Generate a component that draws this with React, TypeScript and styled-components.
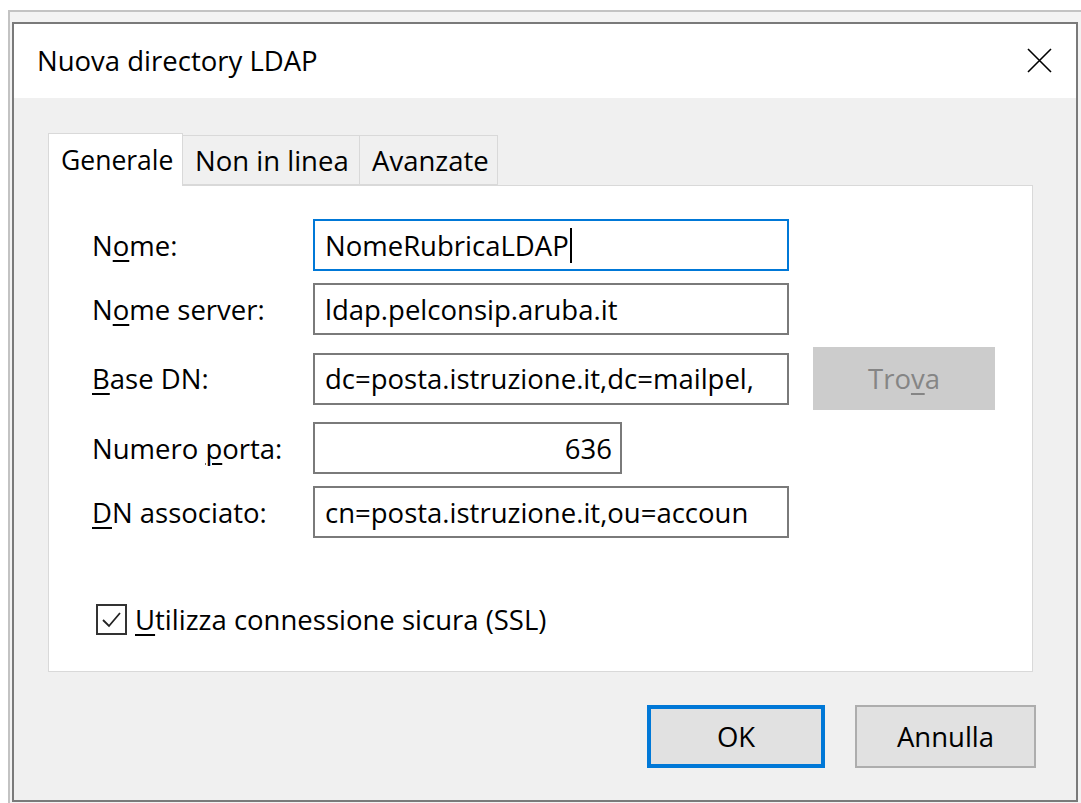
import React from 'react';
import styled, { createGlobalStyle } from 'styled-components';

const FONT = `"Open Sans", "Noto Sans", "Liberation Sans", sans-serif`;
const ACCENT = '#0078d7';
const TEXT_SIZE = '27.5px';

const GlobalStyle = createGlobalStyle`
  html, body {
    margin: 0;
    padding: 0;
    background: #ffffff;
  }
  body {
    font-family: ${FONT};
    color: #000000;
  }
`;

// ---------------------------------------------------------------------------
// window chrome
// ---------------------------------------------------------------------------

const Frame = styled.div`
  margin: 10px 0 0 8px;
  height: 793px;
  border-top: 2px solid #c3c3c3;
  border-left: 2px solid #c3c3c3;
  background: #f3f3f3;
  box-sizing: border-box;
  padding: 10px 0 0 2px;
`;

const Window = styled.div`
  width: 1066px;
  height: 780px;
  box-sizing: border-box;
  border: 2px solid #7a7a7a;
  background: #f0f0f0;
  display: flex;
  flex-direction: column;
`;

const TitleBar = styled.div`
  height: 74px;
  flex-shrink: 0;
  background: #ffffff;
  display: flex;
  align-items: center;
  justify-content: space-between;
  padding: 0 24px 0 23px;
`;

const Title = styled.span`
  font-size: ${TEXT_SIZE};
  margin-top: -2px;
`;

const CloseButton = styled.button`
  width: 25px;
  height: 25px;
  padding: 0;
  border: none;
  background: transparent;
  display: flex;
  margin-top: -2px;
`;

// ---------------------------------------------------------------------------
// tabs + panel
// ---------------------------------------------------------------------------

const Body = styled.div`
  flex: 1;
  display: flex;
  flex-direction: column;
`;

const TabArea = styled.div`
  padding: 34px 43px 0 34px;
`;

const TabStrip = styled.div`
  display: flex;
  align-items: flex-end;
  height: 53px;
`;

const Tab = styled.div<{ $active?: boolean; $w: number }>`
  width: ${({ $w }) => $w}px;
  height: ${({ $active }) => ($active ? '53px' : '50px')};
  box-sizing: border-box;
  padding-left: 12px;
  display: flex;
  align-items: center;
  font-size: ${({ $active }) => ($active ? '26.5px' : '27.5px')};
  white-space: nowrap;
  background: ${({ $active }) => ($active ? '#ffffff' : '#f0f0f0')};
  border: 1px solid #d9d9d9;
  border-bottom: ${({ $active }) => ($active ? 'none' : '1px solid #d9d9d9')};
  border-left: ${({ $active }) => ($active ? '1px solid #d9d9d9' : 'none')};
  margin-bottom: ${({ $active }) => ($active ? '-1px' : '0')};
  position: relative;
  z-index: ${({ $active }) => ($active ? 1 : 0)};
`;

const Panel = styled.div`
  height: 487px;
  box-sizing: border-box;
  background: #ffffff;
  border: 1px solid #d9d9d9;
  padding: 33px 0 0 43px;
`;

const FieldGrid = styled.div`
  display: grid;
  grid-template-columns: 197px 476px 182px;
  column-gap: 24px;
  row-gap: 12px;
  align-items: center;
`;

const Label = styled.label`
  grid-column: 1;
  font-size: ${TEXT_SIZE};
  white-space: nowrap;
`;

const Key = styled.span`
  text-decoration: underline;
  text-underline-offset: 4px;
  text-decoration-thickness: 2px;
`;

const TextBox = styled.div<{ $focused?: boolean; $width?: number; $align?: string }>`
  grid-column: 2;
  width: ${({ $width }) => ($width ? `${$width}px` : '100%')};
  height: 52px;
  box-sizing: border-box;
  border: 2px solid ${({ $focused }) => ($focused ? ACCENT : '#7a7a7a')};
  background: #ffffff;
  padding: 0 8px 0 10px;
  display: flex;
  align-items: center;
  justify-content: ${({ $align }) => ($align === 'right' ? 'flex-end' : 'flex-start')};
  font-size: ${TEXT_SIZE};
  white-space: nowrap;
  overflow: hidden;
`;

const Caret = styled.span`
  display: inline-block;
  flex-shrink: 0;
  width: 2px;
  height: 35px;
  background: #000000;
  margin-left: 1px;
`;

const PushButton = styled.button<{ $variant?: 'default' | 'disabled' | 'normal' }>`
  font-family: ${FONT};
  font-size: ${TEXT_SIZE};
  height: 63px;
  box-sizing: border-box;
  padding: 0;
  display: flex;
  align-items: center;
  justify-content: center;
  color: ${({ $variant }) => ($variant === 'disabled' ? '#858585' : '#000000')};
  background: ${({ $variant }) => ($variant === 'disabled' ? '#cccccc' : '#e1e1e1')};
  border: ${({ $variant }) =>
    $variant === 'default'
      ? `4px solid ${ACCENT}`
      : $variant === 'disabled'
        ? '2px solid #cccccc'
        : '2px solid #adadad'};
`;

const SideButton = styled(PushButton)`
  grid-column: 3;
  width: 182px;
`;

const CheckRow = styled.div`
  display: flex;
  align-items: center;
  gap: 8px;
  margin: 63px 0 0 4px;
  font-size: ${TEXT_SIZE};
`;

const CheckBox = styled.span`
  width: 31px;
  height: 31px;
  flex-shrink: 0;
  box-sizing: border-box;
  border: 2px solid #333333;
  background: #ffffff;
  display: flex;
  align-items: center;
  justify-content: center;
`;

const Footer = styled.div`
  display: flex;
  justify-content: flex-end;
  gap: 30px;
  padding: 33px 40px 0 0;
`;

const FooterButton = styled(PushButton)<{ $w: number }>`
  width: ${({ $w }) => $w}px;
`;

// ---------------------------------------------------------------------------
// component
// ---------------------------------------------------------------------------

const TABS = [
  { label: 'Generale', width: 135 },
  { label: 'Non in linea', width: 177 },
  { label: 'Avanzate', width: 138 },
];

export default function App() {
  return (
    <>
      <GlobalStyle />
      <Frame>
        <Window>
          <TitleBar>
            <Title>Nuova directory LDAP</Title>
            <CloseButton aria-label="Chiudi">
              <svg width="25" height="25" viewBox="0 0 25 25">
                <path d="M1 1 L24 24 M24 1 L1 24" stroke="#000" strokeWidth="1.6" fill="none" />
              </svg>
            </CloseButton>
          </TitleBar>

          <Body>
            <TabArea>
              <TabStrip>
                {TABS.map((t, i) => (
                  <Tab key={t.label} $active={i === 0} $w={t.width}>
                    {t.label}
                  </Tab>
                ))}
              </TabStrip>
              <Panel>
                <FieldGrid>
                  <Label>
                    N<Key>o</Key>me:
                  </Label>
                  <TextBox $focused>
                    NomeRubricaLDAP
                    <Caret />
                  </TextBox>

                  <Label>
                    N<Key>o</Key>me server:
                  </Label>
                  <TextBox>ldap.pelconsip.aruba.it</TextBox>

                  <Label>
                    <Key>B</Key>ase DN:
                  </Label>
                  <TextBox>dc=posta.istruzione.it,dc=mailpel,</TextBox>
                  <SideButton $variant="disabled" disabled>
                    Tro<Key>v</Key>a
                  </SideButton>

                  <Label>
                    Numero <Key>p</Key>orta:
                  </Label>
                  <TextBox $width={309} $align="right">
                    636
                  </TextBox>

                  <Label>
                    <Key>D</Key>N associato:
                  </Label>
                  <TextBox>cn=posta.istruzione.it,ou=accoun</TextBox>
                </FieldGrid>

                <CheckRow>
                  <CheckBox>
                    <svg width="23" height="23" viewBox="0 0 23 23">
                      <path d="M3 12 L9 18 L20 5" stroke="#222" strokeWidth="1.8" fill="none" />
                    </svg>
                  </CheckBox>
                  <span>
                    <Key>U</Key>tilizza connessione sicura (SSL)
                  </span>
                </CheckRow>
              </Panel>
            </TabArea>

            <Footer>
              <FooterButton $variant="default" $w={178}>
                OK
              </FooterButton>
              <FooterButton $variant="normal" $w={181}>
                Annulla
              </FooterButton>
            </Footer>
          </Body>
        </Window>
      </Frame>
    </>
  );
}
